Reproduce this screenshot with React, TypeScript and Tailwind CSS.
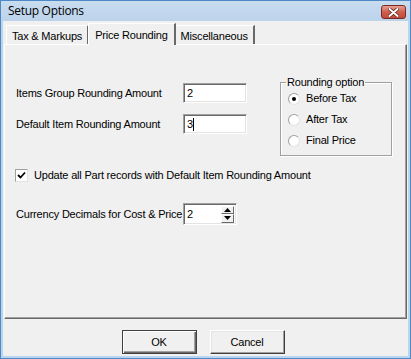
import React from "react";

const sunken =
  "border border-t-[#a0a0a0] border-l-[#a0a0a0] border-r-white border-b-white shadow-[inset_1px_1px_0_#696969,inset_-1px_-1px_0_#e3e3e3] bg-white";

function Radio({ label, checked }: { label: string; checked?: boolean }) {
  return (
    <div className="flex items-center h-[21px]">
      <div className="w-[12px] h-[12px] rounded-full bg-white border border-t-[#a0a0a0] border-l-[#a0a0a0] border-r-[#e3e3e3] border-b-[#e3e3e3] flex items-center justify-center ml-[7px]">
        {checked && <div className="w-[4px] h-[4px] rounded-full bg-black" />}
      </div>
      <span className="ml-[6px]">{label}</span>
    </div>
  );
}

function Tab({ label, active }: { label: string; active?: boolean }) {
  if (active) {
    return (
      <div className="h-[22px] -mb-px relative z-10 bg-[#f0f0f0] border-t border-l border-white border-r-2 border-r-[#696969] px-[6px] pt-[3px] -mx-[1px] whitespace-nowrap">
        {label}
      </div>
    );
  }
  return (
    <div className="h-[19px] border-t border-l border-white border-r-2 border-r-[#696969] px-[5px] pt-[2px] bg-[#f0f0f0] whitespace-nowrap">
      {label}
    </div>
  );
}

function Button({ label, dflt }: { label: string; dflt?: boolean }) {
  return (
    <div
      className={
        "w-[75px] h-[24px] flex items-center justify-center border " +
        (dflt
          ? "border-[#404040] shadow-[inset_1px_1px_0_#fff,inset_-1px_-1px_0_#696969,inset_-2px_-2px_0_#a0a0a0]"
          : "border-t-white border-l-white border-r-[#404040] border-b-[#404040] shadow-[inset_-1px_-1px_0_#a0a0a0,inset_1px_1px_0_#e3e3e3]")
      }
    >
      {label}
    </div>
  );
}

export default function App() {
  return (
    <div
      className="w-[411px] h-[359px] bg-[#f0f0f0] border border-[#4f88c6] flex flex-col text-[11px] tracking-[-0.2px] text-black overflow-hidden"
      style={{ fontFamily: '"Liberation Sans", Arial, sans-serif' }}
    >
      {/* Title bar */}
      <div className="h-[20px] shrink-0 flex items-center justify-between bg-gradient-to-b from-[#c9dcf0] to-[#bcd3ea] pl-[7px] pr-[4px]">
        <span
          className="text-[12px] tracking-[-0.3px] text-black"
          style={{ fontFamily: '"Open Sans", "Liberation Sans", sans-serif' }}
        >
          Setup Options
        </span>
        <div className="w-[25px] h-[14px] mt-[2px] rounded-[3px] border border-[#7a2a22] bg-gradient-to-b from-[#e6a195] via-[#cf5d4e] to-[#c44a3a] flex items-center justify-center">
          <svg width="11" height="9" viewBox="0 0 11 9">
            <path d="M1.5 1 L9.5 8 M9.5 1 L1.5 8" stroke="#5a1d16" strokeWidth="3.4" strokeLinecap="round" />
            <path d="M1.5 1 L9.5 8 M9.5 1 L1.5 8" stroke="#fff" strokeWidth="2" strokeLinecap="round" />
          </svg>
        </div>
      </div>

      <div className="flex-1 flex flex-col border-x-2 border-b-2 border-[#b9d5ef]">
        {/* Tabs */}
        <div className="h-[23px] shrink-0 flex items-end pl-[3px]">
          <Tab label="Tax & Markups" />
          <Tab label="Price Rounding" active />
          <Tab label="Miscellaneous" />
        </div>

        {/* Panel */}
        <div className="mx-[1px] h-[275px] border-t border-l border-white border-r border-b border-r-[#696969] border-b-[#696969] shadow-[inset_-1px_-1px_0_#a0a0a0]">
          <div className="flex pt-[38px] pl-[11px]">
            <div className="flex flex-col">
              <div className="flex items-center h-[20px]">
                <span className="w-[167px] whitespace-nowrap">Items Group Rounding Amount</span>
                <div className={"w-[64px] h-[20px] pl-[3px] flex items-center " + sunken}>2</div>
              </div>
              <div className="flex items-center h-[20px] mt-[11px]">
                <span className="w-[167px] whitespace-nowrap">Default Item Rounding Amount</span>
                <div className={"w-[64px] h-[20px] pl-[3px] flex items-center " + sunken}>
                  3<span className="w-px h-[13px] bg-black" />
                </div>
              </div>
            </div>
            <fieldset className="ml-[33px] -mt-[7px] w-[112px] h-[80px] border border-[#a0a0a0] shadow-[1px_1px_0_#fff,inset_1px_1px_0_#fff]">
              <legend className="ml-[5px] px-px leading-[13px]">Rounding option</legend>
              <div className="-mt-[1px]">
                <Radio label="Before Tax" checked />
                <Radio label="After Tax" />
                <Radio label="Final Price" />
              </div>
            </fieldset>
          </div>

          <div className="flex items-center pl-[10px] mt-[12px] h-[14px]">
            <div className="w-[13px] h-[13px] bg-white border border-t-[#a0a0a0] border-l-[#a0a0a0] border-r-[#e3e3e3] border-b-[#e3e3e3] flex items-center justify-center">
              <svg width="9" height="9" viewBox="0 0 9 9">
                <path d="M1 4 L3.5 6.5 L8 1.5" stroke="#000" strokeWidth="1.8" fill="none" />
              </svg>
            </div>
            <span className="ml-[6px] whitespace-nowrap">Update all Part records with Default Item Rounding Amount</span>
          </div>

          <div className="flex items-center pl-[11px] mt-[21px]">
            <span className="w-[167px] whitespace-nowrap">Currency Decimals for Cost &amp; Price</span>
            <div className={"w-[54px] h-[22px] pl-[3px] pr-[2px] flex items-center justify-between " + sunken}>
              <span>2</span>
              <div className="flex flex-col w-[13px] h-[17px]">
                {[0, 1].map((i) => (
                  <div
                    key={i}
                    className="flex-1 bg-[#f0f0f0] border border-t-white border-l-white border-r-[#696969] border-b-[#696969] flex items-center justify-center"
                  >
                    <svg width="7" height="4" viewBox="0 0 7 4">
                      <path d={i === 0 ? "M0 4 L3.5 0 L7 4 Z" : "M0 0 L3.5 4 L7 0 Z"} fill="#000" />
                    </svg>
                  </div>
                ))}
              </div>
            </div>
          </div>
        </div>

        {/* Buttons */}
        <div className="flex-1 flex items-start justify-center gap-[13px] pt-[11px] pr-[5px]">
          <Button label="OK" dflt />
          <Button label="Cancel" />
        </div>
      </div>
    </div>
  );
}
